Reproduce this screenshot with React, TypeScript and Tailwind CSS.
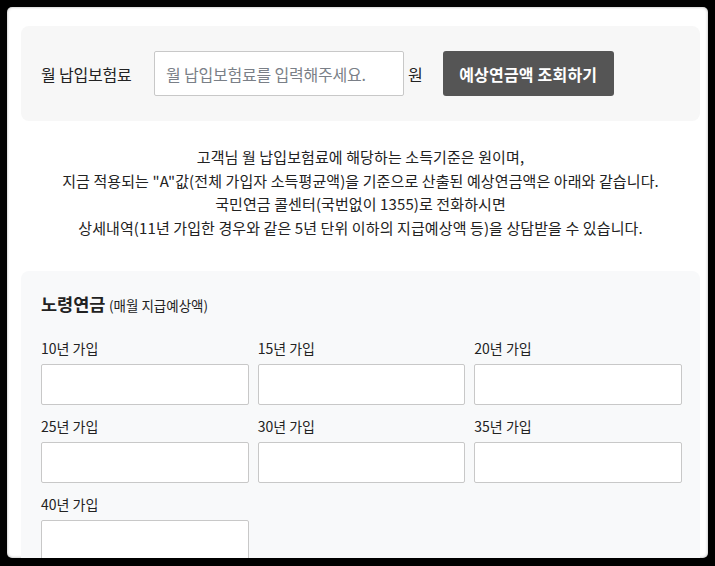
import React from 'react';

const periods = ['10년 가입', '15년 가입', '20년 가입', '25년 가입', '30년 가입', '35년 가입', '40년 가입'];

const App: React.FC = () => {
  return (
    <div
      className="w-[715px] h-[566px] bg-black p-[7px] overflow-hidden"
      style={{ fontFamily: '"Noto Sans CJK KR", "Noto Sans", sans-serif' }}
    >
      <div className="h-[551px] bg-white rounded-[5px] pl-[14px] pr-[8px] pt-[19px] overflow-hidden shadow-[inset_0_0_3px_rgba(0,0,0,0.35)]">
        {/* Premium input */}
        <div className="h-[95px] bg-[#f7f7f7] rounded-[8px] flex items-center pl-[20px]">
          <span className="text-[16px] text-[#222] w-[113px] tracking-[-0.2px]">월 납입보험료</span>
          <input
            className="w-[250px] h-[45px] bg-white border border-[#c8c8c8] rounded-[2px] px-[11px] text-[16px] tracking-[-0.2px] placeholder:text-[#7a7f87] outline-none"
            placeholder="월 납입보험료를 입력해주세요."
          />
          <span className="text-[16px] text-[#222] ml-[4px]">원</span>
          <button className="ml-[20px] w-[171px] h-[45px] bg-[#555555] rounded-[3px] text-white text-[16px] font-bold tracking-[0.2px]">
            예상연금액 조회하기
          </button>
        </div>

        {/* Notice */}
        <div className="mt-[24px] text-center text-[15px] leading-[23.5px] text-[#222] tracking-[0.1px]">
          <p>고객님 월 납입보험료에 해당하는 소득기준은 원이며,</p>
          <p>지금 적용되는 "A"값(전체 가입자 소득평균액)을 기준으로 산출된 예상연금액은 아래와 같습니다.</p>
          <p>국민연금 콜센터(국번없이 1355)로 전화하시면</p>
          <p>상세내역(11년 가입한 경우와 같은 5년 단위 이하의 지급예상액 등)을 상담받을 수 있습니다.</p>
        </div>

        {/* Old-age pension */}
        <div className="mt-[32px] bg-[#f8f9fa] rounded-[8px] pl-[20px] pr-[18px] pt-[20px] pb-[20px]">
          <h3 className="text-[#222] leading-[26px]">
            <span className="text-[17.5px] font-bold">노령연금</span>{' '}
            <span className="text-[13.5px]">(매월 지급예상액)</span>
          </h3>
          <div className="mt-[20px] grid grid-cols-3 gap-x-[9px] gap-y-[11px]">
            {periods.map(p => (
              <div key={p}>
                <div className="text-[14px] leading-[20px] text-[#222]">{p}</div>
                <input className="mt-[6px] w-full h-[41px] bg-white border border-[#c8c8c8] rounded-[2px] outline-none" />
              </div>
            ))}
          </div>
        </div>
      </div>
    </div>
  );
};

export default App;
